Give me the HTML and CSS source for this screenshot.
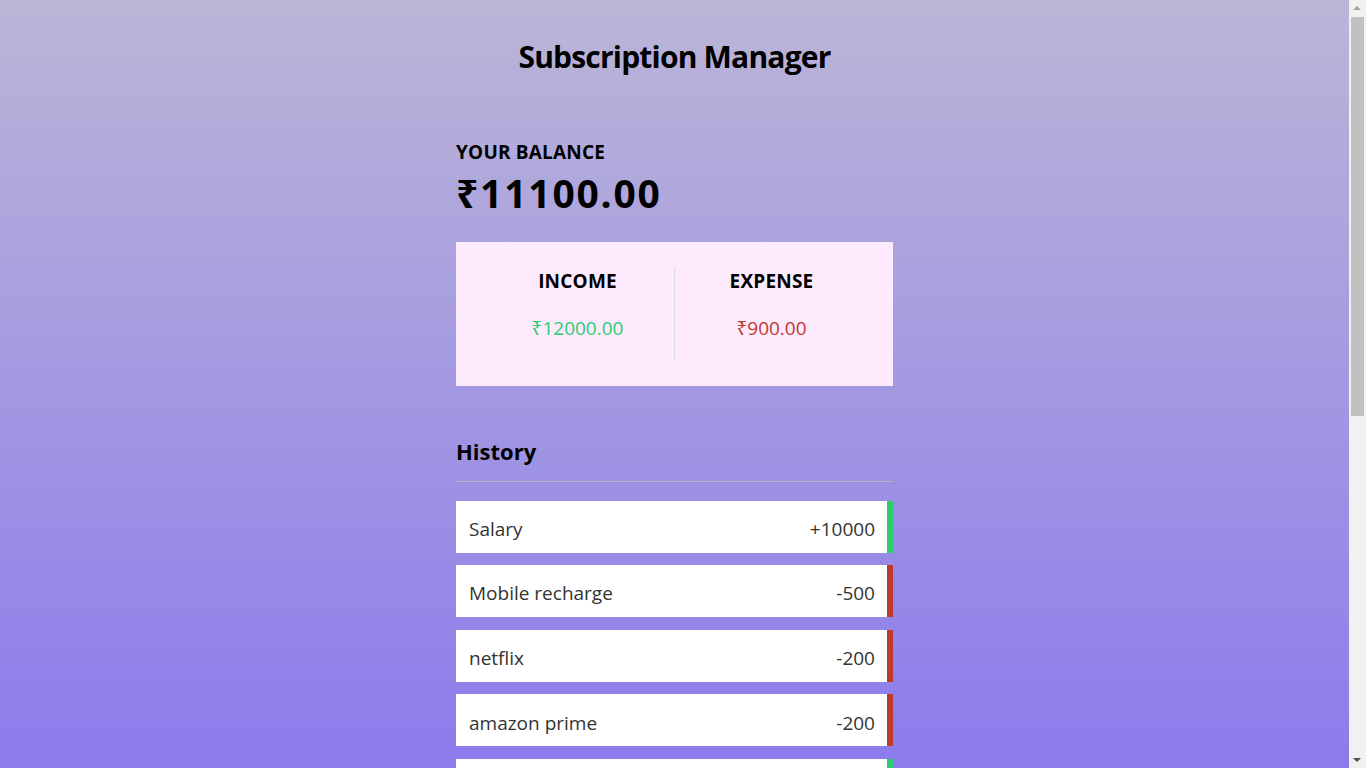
FILE: index.html
```html
<!DOCTYPE html>
<html lang="en">
<head>
<meta charset="utf-8">
<title>Subscription Manager</title>
<link rel="stylesheet" href="styles.css">
</head>
<body>
<div class="container">
  <h1 class="title">Subscription Manager</h1>
  <h4 class="label">Your Balance</h4>
  <h1 class="balance">₹11100.00</h1>

  <div class="inc-exp">
    <div class="col col-inc">
      <h4 class="label">Income</h4>
      <p class="money plus">₹12000.00</p>
    </div>
    <div class="col">
      <h4 class="label">Expense</h4>
      <p class="money minus">₹900.00</p>
    </div>
  </div>

  <h3 class="section">History</h3>
  <ul class="list">
    <li class="item plus"><span>Salary</span><span>+10000</span></li>
    <li class="item minus"><span>Mobile recharge</span><span>-500</span></li>
    <li class="item minus"><span>netflix</span><span>-200</span></li>
    <li class="item minus"><span>amazon prime</span><span>-200</span></li>
    <li class="item plus"><span>Freelance</span><span>+2000</span></li>
  </ul>

  <h3 class="section">Add new transaction</h3>
  <form class="form">
    <div class="field">
      <label class="field-label">Text</label>
      <input class="input" type="text" placeholder="Enter text...">
    </div>
    <div class="field">
      <label class="field-label">Amount<br>(negative - expense, positive - income)</label>
      <input class="input" type="number" placeholder="Enter amount...">
    </div>
    <button class="btn" type="button">Add transaction</button>
  </form>
</div>

<div class="scrollbar" aria-hidden="true">
  <span class="arrow arrow-up"></span>
  <span class="thumb"></span>
  <span class="arrow arrow-down"></span>
</div>
</body>
</html>
```

FILE: styles.css
```css
* { box-sizing: border-box; }

html {
  background: linear-gradient(to bottom, #bbb6d7 0, #8b7bec 768px, #7a68f0 100%);
  min-height: 100%;
}

body {
  margin: 0;
  padding-right: 17px;
  font-family: "Open Sans", "Noto Sans", sans-serif;
  color: #000;
  line-height: 1.33;
}

.container {
  width: 437px;
  margin: 0 auto;
  padding: 37px 0 120px;
}

.title {
  margin: 0;
  font-size: 30px;
  font-weight: 700;
  text-align: center;
  letter-spacing: -0.8px;
}

.label {
  margin: 0;
  font-size: 19px;
  font-weight: 700;
  text-transform: uppercase;
  letter-spacing: 0.2px;
}

.container > .label {
  margin-top: 63px;
}

.balance {
  margin: 2px 0 0;
  font-size: 39px;
  font-weight: 700;
  letter-spacing: 1.8px;
}

.inc-exp {
  margin-top: 23px;
  background: #fdeafd;
  padding: 25px;
  display: flex;
}

.col {
  flex: 1;
  text-align: center;
}

.col .label {
  margin-top: 2px;
}

.col-inc {
  border-right: 1px solid #d9e0d9;
}

.money {
  margin: 21px 0 19.5px;
  font-size: 19px;
  line-height: 26.6px;
}

.money.plus { color: #2ecc71; }
.money.minus { color: #c0392b; }

.section {
  margin: 51px 0 0;
  padding-bottom: 14px;
  border-bottom: 1px solid #b8b8bc;
  font-size: 22px;
  font-weight: 700;
}

.list {
  list-style: none;
  margin: 19px 0 0;
  padding: 0;
  display: flex;
  flex-direction: column;
  gap: 12.6px;
}

.item {
  display: flex;
  justify-content: space-between;
  background: #fff;
  color: #333;
  font-size: 19px;
  line-height: 26.4px;
  padding: 15.2px 12px 10.4px 13px;
}

.item.plus { border-right: 6px solid #2ecc71; }
.item.minus { border-right: 6px solid #c0392b; }

.form {
  margin-top: 20px;
  display: flex;
  flex-direction: column;
  gap: 16px;
}

.field {
  display: flex;
  flex-direction: column;
  gap: 8px;
}

.field-label {
  font-size: 18px;
}

.input {
  border: 1px solid #dedede;
  font-family: inherit;
  font-size: 18px;
  padding: 12px;
}

.btn {
  background: #9c88ff;
  color: #fff;
  border: 0;
  font-family: inherit;
  font-size: 18px;
  padding: 12px;
}

/* Simulated classic scrollbar overlaying the right edge */
.scrollbar {
  position: fixed;
  top: 0;
  right: 0;
  width: 17px;
  height: 100vh;
  background: #f1f1f1;
}

.thumb {
  position: absolute;
  left: 2px;
  right: 2px;
  top: 17px;
  height: 399px;
  background: #c1c1c1;
}

.arrow {
  position: absolute;
  left: 4px;
  width: 0;
  height: 0;
  border-left: 4.5px solid transparent;
  border-right: 4.5px solid transparent;
}

.arrow-up {
  top: 6px;
  border-bottom: 4px solid #a3a3a3;
}

.arrow-down {
  bottom: 6px;
  border-top: 4px solid #505050;
}
```
